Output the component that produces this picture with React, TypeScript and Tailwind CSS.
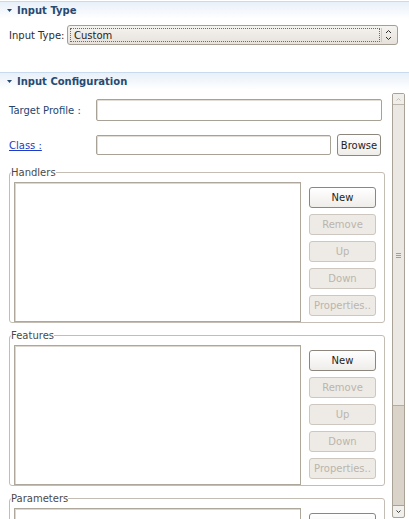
import React from 'react'

const buttonLabels = ['New', 'Remove', 'Up', 'Down', 'Properties..']

function SectionHeader({ title }: { title: string }) {
    return (
        <div className="flex h-[18px] items-center gap-[5px] border-t border-[#c8dbee] bg-gradient-to-b from-[#e8f0f9] to-white pl-[7px] text-[10px] font-bold text-[#274a72]">
            <svg width="5" height="3" viewBox="0 0 5 3">
                <path d="M0 0h5L2.5 3z" fill="#274a72" />
            </svg>
            <span className="leading-none">{title}</span>
        </div>
    )
}

function SwtButton({ label, enabled = false, className = '' }: { label: string; enabled?: boolean; className?: string }) {
    return enabled ? (
        <div
            className={`flex items-center justify-center rounded-[3px] border border-[#8c867d] bg-gradient-to-b from-white to-[#efedea] text-[10px] text-[#1e1e1e] ${className}`}
        >
            {label}
        </div>
    ) : (
        <div
            className={`flex items-center justify-center overflow-hidden whitespace-nowrap rounded-[3px] border border-[#cdc7bf] bg-[#eeebe6] text-[10px] text-[#bab5ad] ${className}`}
        >
            {label}
        </div>
    )
}

function Group({ title, className = '' }: { title: string; className?: string }) {
    return (
        <fieldset className={`ml-[9px] w-[376px] rounded-[3px] border border-[#c3bdb4] pb-0 pl-[4px] pr-[8px] pt-[3px] ${className}`}>
            <legend className="ml-[-3px] px-0 text-[10px] leading-[13px] text-[#4a4a4a]">{title}</legend>
            <div className="flex gap-[8px]">
                <div className="h-[140px] w-[287px] border border-[#aea79c] bg-white shadow-[inset_1px_1px_0_#dcd7cf]" />
                <div className="mt-[5px] flex w-[67px] flex-col gap-[6px]">
                    {buttonLabels.map((label, i) => (
                        <SwtButton key={label} label={label} enabled={i === 0} className="h-[21px]" />
                    ))}
                </div>
            </div>
        </fieldset>
    )
}

function ScrollBar() {
    return (
        <div className="mb-[1px] mr-[4px] mt-[3px] flex w-[13px] flex-col rounded-[2px] border border-[#a9a296] bg-[#d9d3c9]">
            <div className="flex h-[11px] items-center justify-center border-b border-[#bdb6ab] bg-[#f0eeea]">
                <svg width="5" height="3" viewBox="0 0 5 3">
                    <path d="M0.5 2.5L2.5 0.5L4.5 2.5" stroke="#c2bcb2" fill="none" />
                </svg>
            </div>
            <div className="flex h-[301px] items-center justify-center border-b border-[#b4ada2] bg-[#ebe8e3]">
                <div className="flex w-[5px] flex-col gap-[1px]">
                    <div className="h-px bg-[#a59e93]" />
                    <div className="h-px bg-[#a59e93]" />
                    <div className="h-px bg-[#a59e93]" />
                </div>
            </div>
            <div className="flex-1" />
            <div className="flex h-[12px] items-center justify-center rounded-b-[2px] border-t border-[#a9a296] bg-[#f2f0ec]">
                <svg width="5" height="3" viewBox="0 0 5 3">
                    <path d="M0.5 0.5L2.5 2.5L4.5 0.5" stroke="#3a3a3a" fill="none" />
                </svg>
            </div>
        </div>
    )
}

export default function App() {
    return (
        <div className="h-[519px] w-[409px] overflow-hidden bg-white pt-[1px] font-['DejaVu_Sans',sans-serif] text-[10px]">
            <SectionHeader title="Input Type" />
            <div className="mt-[6px] flex items-center pl-[9px]">
                <span className="w-[58px] text-[#2c2c2c]">Input Type:</span>
                <div className="flex h-[20px] w-[331px] items-center rounded-[3px] border border-[#a59e93] bg-gradient-to-b from-[#f6f4f1] to-[#e6e1da] pl-[2px] pr-[5px]">
                    <div className="flex h-[14px] flex-1 items-center border border-dotted border-[#6f6a63] pl-[3px] text-[#1e1e1e]">
                        Custom
                    </div>
                    <div className="ml-[1px] h-[14px] w-px bg-[#cfc9c0]" />
                    <svg className="ml-[3px]" width="7" height="12" viewBox="0 0 7 12">
                        <path d="M1 4L3.5 1.5L6 4M1 8L3.5 10.5L6 8" stroke="#2e2e2e" fill="none" />
                    </svg>
                </div>
            </div>
            <div className="mt-[27px]">
                <SectionHeader title="Input Configuration" />
            </div>
            <div className="flex h-[429px]">
                <div className="flex-1 overflow-hidden pt-[9px]">
                    <div className="flex items-center">
                        <span className="w-[96px] shrink-0 pl-[9px] text-[#23466f]">Target Profile :</span>
                        <div className="h-[22px] w-[286px] rounded-[2px] border border-[#a8a196] bg-white shadow-[inset_1px_1px_0_#e2ded7]" />
                    </div>
                    <div className="mt-[13px] flex items-center">
                        <span className="w-[96px] shrink-0 pl-[9px]">
                            <span className="text-[#1f3cc4] underline">Class :</span>
                        </span>
                        <div className="h-[20px] w-[235px] rounded-[2px] border border-[#a8a196] bg-white shadow-[inset_1px_1px_0_#e2ded7]" />
                        <SwtButton label="Browse" enabled className="ml-[6px] h-[22px] w-[44px]" />
                    </div>
                    <Group title="Handlers" className="mt-[10px]" />
                    <Group title="Features" className="mt-[6px]" />
                    <Group title="Parameters" className="mt-[6px]" />
                </div>
                <ScrollBar />
            </div>
        </div>
    )
}
